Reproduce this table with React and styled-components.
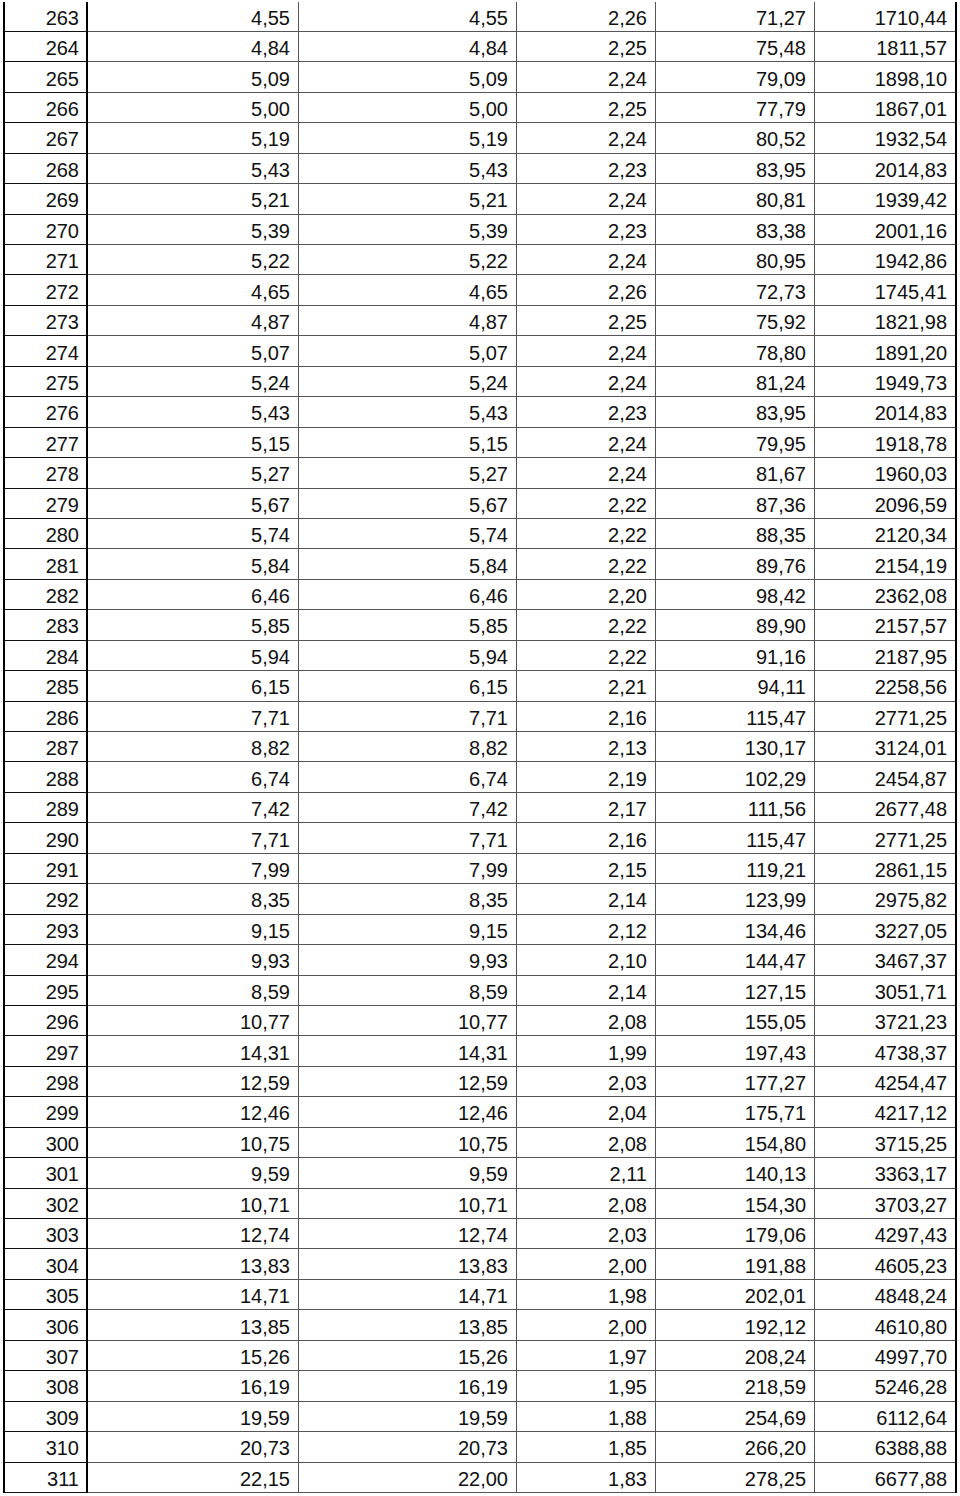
import React from "react";
import styled, { createGlobalStyle } from "styled-components";

const Global = createGlobalStyle`
  html, body { margin: 0; padding: 0; background: #fff; }
  body { font-family: "Liberation Sans", Arial, sans-serif; color: #000; }
`;

const raw = `263|4,55|4,55|2,26|71,27|1710,44
264|4,84|4,84|2,25|75,48|1811,57
265|5,09|5,09|2,24|79,09|1898,10
266|5,00|5,00|2,25|77,79|1867,01
267|5,19|5,19|2,24|80,52|1932,54
268|5,43|5,43|2,23|83,95|2014,83
269|5,21|5,21|2,24|80,81|1939,42
270|5,39|5,39|2,23|83,38|2001,16
271|5,22|5,22|2,24|80,95|1942,86
272|4,65|4,65|2,26|72,73|1745,41
273|4,87|4,87|2,25|75,92|1821,98
274|5,07|5,07|2,24|78,80|1891,20
275|5,24|5,24|2,24|81,24|1949,73
276|5,43|5,43|2,23|83,95|2014,83
277|5,15|5,15|2,24|79,95|1918,78
278|5,27|5,27|2,24|81,67|1960,03
279|5,67|5,67|2,22|87,36|2096,59
280|5,74|5,74|2,22|88,35|2120,34
281|5,84|5,84|2,22|89,76|2154,19
282|6,46|6,46|2,20|98,42|2362,08
283|5,85|5,85|2,22|89,90|2157,57
284|5,94|5,94|2,22|91,16|2187,95
285|6,15|6,15|2,21|94,11|2258,56
286|7,71|7,71|2,16|115,47|2771,25
287|8,82|8,82|2,13|130,17|3124,01
288|6,74|6,74|2,19|102,29|2454,87
289|7,42|7,42|2,17|111,56|2677,48
290|7,71|7,71|2,16|115,47|2771,25
291|7,99|7,99|2,15|119,21|2861,15
292|8,35|8,35|2,14|123,99|2975,82
293|9,15|9,15|2,12|134,46|3227,05
294|9,93|9,93|2,10|144,47|3467,37
295|8,59|8,59|2,14|127,15|3051,71
296|10,77|10,77|2,08|155,05|3721,23
297|14,31|14,31|1,99|197,43|4738,37
298|12,59|12,59|2,03|177,27|4254,47
299|12,46|12,46|2,04|175,71|4217,12
300|10,75|10,75|2,08|154,80|3715,25
301|9,59|9,59|2,11|140,13|3363,17
302|10,71|10,71|2,08|154,30|3703,27
303|12,74|12,74|2,03|179,06|4297,43
304|13,83|13,83|2,00|191,88|4605,23
305|14,71|14,71|1,98|202,01|4848,24
306|13,85|13,85|2,00|192,12|4610,80
307|15,26|15,26|1,97|208,24|4997,70
308|16,19|16,19|1,95|218,59|5246,28
309|19,59|19,59|1,88|254,69|6112,64
310|20,73|20,73|1,85|266,20|6388,88
311|22,15|22,00|1,83|278,25|6677,88`;

const rows = raw.split("\n").map((l) => l.split("|"));

const Sheet = styled.div`
  margin: 1.5px 0 0 3px;
  width: 950px;
  border-left: 2px solid #000;
  border-right: 2px solid #000;
`;

const Row = styled.div`
  display: grid;
  grid-template-columns: 83px 211px 218px 139px 159px 140px;
  height: 30.45px;
`;

const Cell = styled.div`
  box-sizing: border-box;
  height: 30.45px;
  display: flex;
  align-items: center;
  justify-content: flex-end;
  padding: 3px ${(p) => (p.$key ? "7px" : "8px")} 0 0;
  border-bottom: ${(p) => (p.$key ? "1.5px solid #111" : "1px solid #555")};
  border-right: ${(p) =>
    p.$key ? "2px solid #000" : p.$last ? "none" : "1px solid #555"};
  font-size: 20px;
  line-height: 1;
  white-space: nowrap;
  color: #111;
`;

export default function App() {
  return (
    <>
      <Global />
      <Sheet>
        {rows.map((r) => (
          <Row key={r[0]}>
            {r.map((v, i) => (
              <Cell key={i} $key={i === 0} $last={i === r.length - 1}>
                {v}
              </Cell>
            ))}
          </Row>
        ))}
      </Sheet>
    </>
  );
}
